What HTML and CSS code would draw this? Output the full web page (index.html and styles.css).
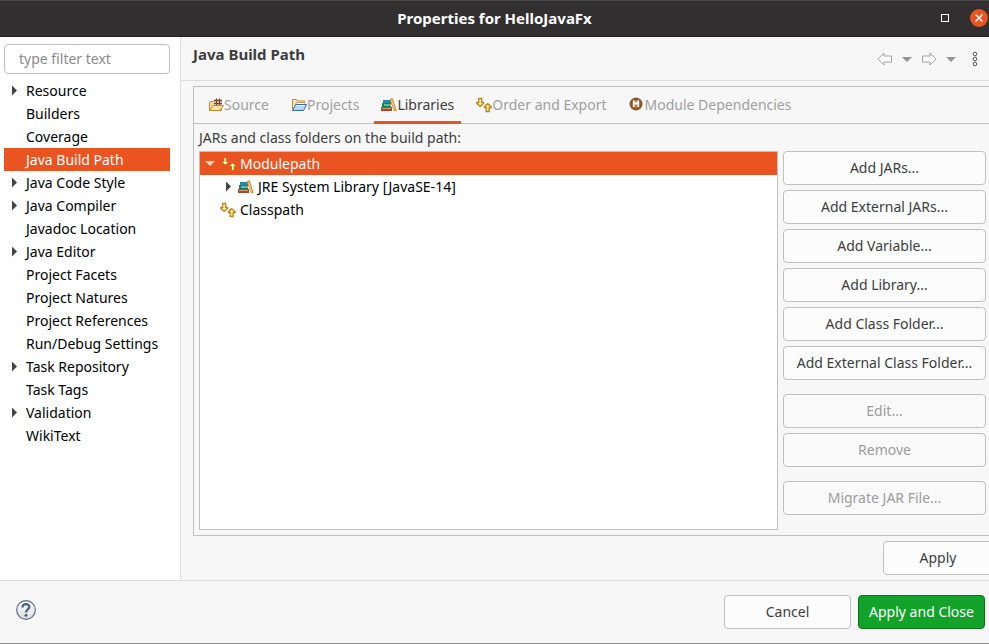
FILE: index.html
```html
<!DOCTYPE html>
<html lang="en">
<head>
<meta charset="utf-8">
<title>Properties for HelloJavaFx</title>
<link rel="stylesheet" href="styles.css">
</head>
<body>
<svg class="defs" aria-hidden="true">
  <symbol id="books" viewBox="0 0 16 16">
    <path d="M2 3h7v1H2zM2 4h8v2H2z" fill="#2589a3"/>
    <path d="M1 6h9v4H1z" fill="#168067"/><path d="M3 7h7v2H3z" fill="#62bd94"/>
    <path d="M0 10h11v4H0z" fill="#a4472c"/><path d="M1 11h9v1H1z" fill="#dc9469"/>
    <path d="M9 2.500l2.300-1 4 12-2 .5z" fill="#f0a23a" stroke="#b9701f" stroke-width=".6"/>
    <path d="M10.500 3.500l3 9" stroke="#ffd17c"/>
  </symbol>
  <symbol id="order" viewBox="0 0 16 16">
    <path d="M2.700 1.500h3v4h1.800v1L4.200 9.300.8 6.500v-1h1.900z" fill="#fff3bd" stroke="#b98518" stroke-width="1.300"/>
    <path d="M10.200 14.500h3v-4h1.900v-1l-3.400-2.800-3.300 2.800v1h1.800z" fill="#ffeb9c" stroke="#b98518" stroke-width="1.300"/>
  </symbol>
  <symbol id="order-light" viewBox="0 0 16 16">
    <path d="M3.200 1.500h2v4h2v1l-3 2.500-3-2.500v-1h2z" fill="#fff8c6" stroke="#b57b12"/>
    <path d="M10.700 14.500h2v-4h2v-1l-3-2.500-3 2.500v1h2z" fill="#fff0ac" stroke="#b57b12"/>
    <path d="M3.500 2h1.500v4h1.500L4.200 8 2 6h1.500zM11 14h1.500v-4H14l-2.300-2L9.500 10H11z" fill="#fff6b0"/>
  </symbol>
</svg>
<div class="window">
  <header class="titlebar">
    <h1>Properties for HelloJavaFx</h1>
    <div class="window-actions">
      <button class="maximize" aria-label="Maximize"></button>
      <button class="close" aria-label="Close"><svg width="8" height="8" viewBox="0 0 8 8"><path d="M.5.5l7 7m0-7l-7 7" stroke="#fff" stroke-width="1.500"/></svg></button>
    </div>
  </header>
  <div class="body">
    <aside class="sidebar">
      <input class="filter" type="text" placeholder="type filter text" aria-label="Filter">
      <ul class="nav">
        <li><a href="#" class="branch">Resource</a></li>
        <li><a href="#">Builders</a></li>
        <li><a href="#">Coverage</a></li>
        <li><a href="#" class="selected">Java Build Path</a></li>
        <li><a href="#" class="branch">Java Code Style</a></li>
        <li><a href="#" class="branch">Java Compiler</a></li>
        <li><a href="#">Javadoc Location</a></li>
        <li><a href="#" class="branch">Java Editor</a></li>
        <li><a href="#">Project Facets</a></li>
        <li><a href="#">Project Natures</a></li>
        <li><a href="#">Project References</a></li>
        <li><a href="#">Run/Debug Settings</a></li>
        <li><a href="#" class="branch">Task Repository</a></li>
        <li><a href="#">Task Tags</a></li>
        <li><a href="#" class="branch">Validation</a></li>
        <li><a href="#">WikiText</a></li>
      </ul>
    </aside>
    <main class="page">
      <div class="page-head">
        <h2>Java Build Path</h2>
        <div class="history">
          <button aria-label="Back"><svg width="16" height="14" viewBox="0 0 16 14"><path d="M.8 7L7 1v3h7.500v6H7v3z" fill="#fff" stroke="#a0a0a0"/></svg></button>
          <button aria-label="Back history"><svg width="10" height="5" viewBox="0 0 10 5"><path d="M0 0h10L5 5z" fill="#949494"/></svg></button>
          <button aria-label="Forward"><svg width="16" height="14" viewBox="0 0 16 14"><path d="M15.200 7L9 1v3H1.500v6H9v3z" fill="#fff" stroke="#a0a0a0"/></svg></button>
          <button aria-label="Forward history"><svg width="10" height="5" viewBox="0 0 10 5"><path d="M0 0h10L5 5z" fill="#949494"/></svg></button>
          <button class="more" aria-label="View menu"><svg width="6" height="16" viewBox="0 0 6 16"><g fill="#fff" stroke="#555"><circle cx="3" cy="3" r="1.800"/><circle cx="3" cy="8" r="1.800"/><circle cx="3" cy="13" r="1.800"/></g></svg></button>
        </div>
      </div>
      <section class="folder">
        <div class="tabs" role="tablist">
          <button role="tab"><svg class="icon" viewBox="0 0 16 16"><path d="M1.500 13.500v-8l1-1h3l1 1h7v8z" fill="#f4d99a" stroke="#bd8436"/><path d="M6 2h8v6H6z" fill="#d9b48c"/><path d="M6 3.500h8M6 6.500h8M8.500 1.500v7M11.500 1.500v7" stroke="#70442c"/><path d="M1.500 13.500l3.500-5h10.500l-3.500 5z" fill="#ffe2a0" stroke="#c48632"/></svg>Source</button>
          <button role="tab"><svg class="icon" viewBox="0 0 16 16"><path d="M1.500 12.500v-10h4l1 1.500h7v4" fill="#ffeeba" stroke="#b58b3c"/><path d="M5 5.500h9v3H5z" fill="#fffbe0" stroke="#d0a75a"/><path d="M1.500 13.500l3-6h11l-3 6z" fill="#b4d8f6" stroke="#3c66ad"/><path d="M5 8.500h9" stroke="#e5f5ff"/></svg>Projects</button>
          <button role="tab" aria-selected="true" class="active"><svg class="icon"><use href="#books"/></svg>Libraries</button>
          <button role="tab"><svg class="icon"><use href="#order"/></svg>Order and Export</button>
          <button role="tab"><svg class="icon" viewBox="0 0 16 16"><circle cx="7" cy="7" r="6.500" fill="#8c5a2d"/><circle cx="7" cy="7" r="5" fill="#a77749" stroke="#825128"/><path d="M4.800 10V4.500L7 7l2.200-2.500V10" fill="none" stroke="#fff" stroke-width="1.500"/></svg>Module Dependencies</button>
        </div>
        <div class="panel">
          <p class="caption" id="tree-label">JARs and class folders on the build path:</p>
          <div class="columns">
            <ul class="tree" role="tree" aria-labelledby="tree-label">
              <li role="treeitem" class="open selected"><svg class="icon"><use href="#order-light"/></svg>Modulepath</li>
              <li role="treeitem" class="branch child"><svg class="icon"><use href="#books"/></svg>JRE System Library [JavaSE-14]</li>
              <li role="treeitem"><svg class="icon"><use href="#order"/></svg>Classpath</li>
            </ul>
            <div class="actions">
              <button class="btn">Add JARs...</button>
              <button class="btn">Add External JARs...</button>
              <button class="btn">Add Variable...</button>
              <button class="btn">Add Library...</button>
              <button class="btn">Add Class Folder...</button>
              <button class="btn">Add External Class Folder...</button>
              <button class="btn group" disabled>Edit...</button>
              <button class="btn" disabled>Remove</button>
              <button class="btn group" disabled>Migrate JAR File...</button>
            </div>
          </div>
        </div>
      </section>
      <div class="apply-row"><button class="btn">Apply</button></div>
    </main>
  </div>
  <footer class="footer">
    <button class="help" aria-label="Help"><svg width="20" height="20" viewBox="0 0 20 20"><defs><linearGradient id="shade" x2="0" y2="1"><stop stop-color="#fff"/><stop offset="1" stop-color="#ddd"/></linearGradient></defs><circle cx="10" cy="10" r="9.300" fill="url(#shade)" stroke="#576c8c" stroke-width="1.200"/><path d="M6.500 7.500C6.300 3 13.500 3 13.300 7.200 13.200 9.500 10 9.500 10 12.500" fill="none" stroke="#4d6488" stroke-width="2.400"/><circle cx="10" cy="15.200" r="1.500" fill="#4d6488"/></svg></button>
    <button class="btn">Cancel</button>
    <button class="btn primary">Apply and Close</button>
  </footer>
</div>
</body>
</html>
```
FILE: styles.css
```css
* { box-sizing: border-box; }
body {
  margin: 0;
  background: #f7f7f7;
  color: #3d3d3d;
  font: 14px/23px "Noto Sans", "Open Sans", sans-serif;
  overflow: hidden;
}
button, input { font: inherit; color: inherit; }
button { margin: 0; padding: 0; border: 0; background: none; }
ul { margin: 0; padding: 0; list-style: none; }
h1, h2 { margin: 0; font-size: 15px; }
p { margin: 0; }
svg { display: block; }
.defs { display: none; }
.icon { width: 16px; height: 16px; flex: none; }

.window {
  display: flex;
  flex-direction: column;
  min-height: 100vh;
  border-bottom: 1px solid #909090;
}
.titlebar {
  display: grid;
  grid-template-columns: 1fr auto 1fr;
  align-items: center;
  height: 37px;
  background: #322f30;
  border-top: 1px solid #474545;
  border-bottom: 1px solid #1f1d1e;
  color: #fff;
}
.titlebar h1 { grid-column: 2; }
.window-actions {
  display: flex;
  justify-content: flex-end;
  align-items: center;
  gap: 21px;
  padding: 0 1px 2px 0;
}
.maximize { width: 8px; height: 8px; border: 1px solid #fff; }
.close {
  display: grid;
  place-items: center;
  width: 18px;
  height: 18px;
  border-radius: 50%;
  background: #e95420;
}

.body { display: flex; flex: 1; }
.sidebar {
  width: 181px;
  padding: 7px 10px 0 4px;
  background: #fff;
  border-right: 1px solid #dedede;
}
.filter {
  display: block;
  width: 100%;
  height: 30px;
  margin-bottom: 5px;
  padding: 0 14px 2px;
  border: 1px solid #c0c0c0;
  border-radius: 4px;
  background: #fff;
}
.filter::placeholder { color: #8b8b8b; opacity: 1; }
.nav a {
  display: flex;
  align-items: center;
  height: 23px;
  padding-left: 22px;
  color: #000;
  text-decoration: none;
  white-space: nowrap;
}
.nav .branch { padding-left: 8px; }
.branch::before {
  content: "";
  width: 5px;
  height: 10px;
  margin-right: 9px;
  background: #444;
  clip-path: polygon(0 0, 100% 50%, 0 100%);
}
.nav .selected { background: #e95420; color: #fff; }

.page {
  display: flex;
  flex-direction: column;
  flex: 1;
  min-width: 0;
}
.page-head {
  display: flex;
  justify-content: space-between;
  height: 44px;
  padding: 6px 11px 5px 12px;
  border-bottom: 1px solid #dedede;
}
.history { display: flex; align-items: center; gap: 9px; }
.history .more { margin-left: 7px; }
.folder {
  display: flex;
  flex-direction: column;
  flex: 1;
  margin: 5px 0 0 12px;
  border: 1px solid #c0c0c0;
  border-right: 0;
}
.tabs {
  display: flex;
  gap: 8px;
  height: 37px;
  padding-left: 7px;
  border-bottom: 1px solid #c0c0c0;
  color: #a0a0a0;
}
.tabs button {
  display: flex;
  align-items: center;
  height: 37px;
  padding: 1px 7px 0;
  border-bottom: 3px solid transparent;
  white-space: nowrap;
}
.tabs .active { color: #3d3d3d; border-color: #e95420; }
.panel {
  display: flex;
  flex-direction: column;
  flex: 1;
  padding: 2px 3px 5px 5px;
}
.caption { margin-bottom: 2px; }
.columns { display: flex; flex: 1; gap: 5px; }
.tree {
  flex: 1;
  background: #fff;
  border: 1px solid #c0c0c0;
  color: #000;
}
.tree li {
  display: flex;
  align-items: center;
  gap: 4px;
  height: 23px;
  padding-left: 20px;
}
.tree .child { padding-left: 26px; }
.tree .branch::before { margin-right: 3px; }
.tree .open { gap: 3px; padding-left: 5px; }
.open::before {
  content: "";
  width: 10px;
  height: 5px;
  margin-right: 3px;
  background: #ffd0bd;
  clip-path: polygon(0 0, 100% 0, 50% 100%);
}
.tree .selected { background: #e95420; color: #fff; }
.actions { display: flex; flex-direction: column; gap: 5px; width: 203px; }
.btn {
  height: 34px;
  padding: 0 8px 2px;
  border: 1px solid #c0c0c0;
  border-radius: 4px;
  background: #fcfcfc;
  white-space: nowrap;
}
.btn:disabled { color: #9c9c9c; background: #fafafa; }
.btn.group { margin-top: 9px; }
.apply-row { display: flex; justify-content: flex-end; padding: 5px 0; }
.apply-row .btn { width: 110px; margin-right: -4px; }

.footer {
  display: flex;
  align-items: center;
  gap: 7px;
  height: 63px;
  padding: 0 4px 0 16px;
  border-top: 1px solid #dedede;
}
.footer .btn { width: 127px; }
.help { margin-right: auto; padding-bottom: 4px; }
.footer .primary {
  background: #13a22a;
  border-color: #0a7519;
  color: #fff;
}
```
